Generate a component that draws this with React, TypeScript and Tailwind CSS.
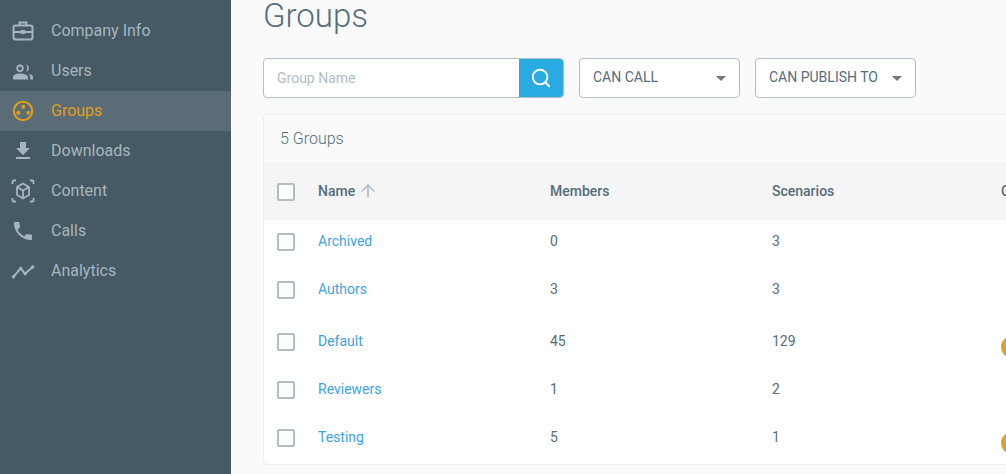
import { ArrowUp, Search } from "lucide-react";
import { ReactNode } from "react";

const navItems: { label: string; active?: boolean; icon: ReactNode }[] = [
	{
		label: "Company Info",
		icon: (
			<svg viewBox="0 0 24 24" className="w-6 h-6" fill="none" stroke="currentColor" strokeWidth="2">
				<path d="M8.500 6.500V3.500h7v3" />
				<rect x="2.500" y="6.500" width="19" height="14" rx="2" />
				<path d="M2.500 13h7.500M14 13h7.500" />
				<rect x="10.300" y="11.500" width="3.400" height="3" fill="currentColor" strokeWidth="1" />
			</svg>
		),
	},
	{
		label: "Users",
		icon: (
			<svg viewBox="0 0 24 24" className="w-6 h-6" fill="currentColor">
				<path d="M9 13a3.700 3.700 0 1 0 0-7.400A3.700 3.700 0 0 0 9 13zm0-5.600a1.900 1.900 0 1 1 0 3.800 1.900 1.900 0 0 1 0-3.800zM15 12.800a3.700 3.700 0 0 0 0-7.200c.8 1 1.200 2.300 1.200 3.600S15.800 11.800 15 12.800zM9 14.500c-3 0-7 1.400-7 3.600V20.500h15v-2.400c0-2.200-5-3.600-8-3.600zM17 14.800c1.500.8 2.200 2 2.200 3.300v2.400H22v-2.400c0-1.800-2.400-3-5-3.300z" />
			</svg>
		),
	},
	{
		label: "Groups",
		active: true,
		icon: (
			<svg viewBox="0 0 24 24" className="w-6 h-6" fill="currentColor">
				<circle cx="12" cy="12" r="9.200" fill="none" stroke="currentColor" strokeWidth="2" />
				<circle cx="12.300" cy="7.700" r="2" />
				<circle cx="7.300" cy="13.700" r="2" />
				<circle cx="17.300" cy="13.700" r="2" />
			</svg>
		),
	},
	{
		label: "Downloads",
		icon: (
			<svg viewBox="0 0 24 24" className="w-6 h-6" fill="currentColor">
				<path d="M19 9h-4V3H9v6H5l7 7 7-7zM5 18v2h14v-2H5z" />
			</svg>
		),
	},
	{
		label: "Content",
		icon: (
			<svg viewBox="0 0 24 24" className="w-6 h-6" fill="none" stroke="currentColor">
				<path d="M5 1.500H2.500a1 1 0 0 0-1 1V5M19 1.500h2.500a1 1 0 0 1 1 1V5M5 22.500H2.500a1 1 0 0 1-1-1V19M19 22.500h2.500a1 1 0 0 0 1-1V19" strokeWidth="1.800" />
				<path d="M12 4.500l6 3.500v8l-6 3.500L6 16V8z" strokeWidth="1.800" />
				<path d="M6 8l6 3.500L18 8M12 11.500v8" strokeWidth="1.800" />
			</svg>
		),
	},
	{
		label: "Calls",
		icon: (
			<svg viewBox="0 0 24 24" className="w-6 h-6" fill="currentColor">
				<path d="M6.620 10.790c1.440 2.830 3.760 5.140 6.590 6.590l2.200-2.200c.270-.270.670-.360 1.020-.240 1.120.370 2.330.570 3.570.570.550 0 1 .450 1 1V20c0 .550-.450 1-1 1-9.390 0-17-7.610-17-17 0-.550.450-1 1-1h3.500c.550 0 1 .450 1 1 0 1.250.200 2.450.570 3.570.110.350.030.740-.250 1.020l-2.200 2.200z" />
			</svg>
		),
	},
	{
		label: "Analytics",
		icon: (
			<svg viewBox="0 0 24 24" className="w-6 h-6" fill="currentColor" stroke="currentColor" strokeWidth="2">
				<path d="M2.500 17.700l7.200-8.400 4.300 5.400L21.700 8" fill="none" />
				<circle cx="2.500" cy="17.700" r=".8" />
				<circle cx="9.700" cy="9.300" r=".6" />
				<circle cx="14" cy="14.700" r=".6" />
				<circle cx="21.700" cy="8" r=".8" />
			</svg>
		),
	},
];

const rows = [
	{ name: "Archived", members: "0", scenarios: "3", height: "h-[45px] pb-[3px]" },
	{ name: "Authors", members: "3", scenarios: "3", height: "h-12" },
	{ name: "Default", members: "45", scenarios: "129", height: "h-14", badge: true },
	{ name: "Reviewers", members: "1", scenarios: "2", height: "h-10" },
	{ name: "Testing", members: "5", scenarios: "1", height: "h-[55px]", badge: true },
];

const Checkbox = () => (
	<span className="block w-[18px] h-[18px] border-2 border-[#b0bec5] rounded-[2px] bg-white shrink-0" />
);

const Dropdown = ({ label }: { label: string }) => (
	<div className="w-[161px] h-10 pl-[13px] pr-[13px] flex items-center justify-between bg-white border border-[#b0bec5] rounded text-sm text-[#546e7a]">
		<span className="-mt-[2px]">{label}</span>
		<span className="border-x-[5px] border-x-transparent border-t-[5px] border-t-[#757575]" />
	</div>
);

const App = () => {
	return (
		<div className="flex w-[1006px] h-[474px] overflow-hidden bg-[#fafafa] font-['Roboto',sans-serif]">
			<aside className="w-[231px] shrink-0 pt-[11px] bg-[#455a64]">
				{navItems.map((item) => (
					<div
						key={item.label}
						className={
							item.active
								? "h-10 pl-[11px] flex items-center gap-4 bg-[#5a6d77] text-[#e39e1b]"
								: "h-10 pl-[11px] flex items-center gap-4 text-[#a7b6be]"
						}
					>
						{item.icon}
						<span className="text-base">{item.label}</span>
					</div>
				))}
			</aside>

			<main className="flex-1 min-w-0 pl-8">
				<h1 className="h-[31px] text-[33px] leading-[31px] font-light text-[#546e7a]">Groups</h1>

				<div className="mt-[27px] flex gap-[15px]">
					<div className="w-[301px] h-10 flex bg-white border border-[#b0bec5] rounded overflow-hidden">
						<input
							placeholder="Group Name"
							className="flex-1 min-w-0 pl-[13px] text-sm text-[#546e7a] placeholder:text-[#b0bec5] outline-none"
						/>
						<button className="w-11 flex items-center justify-center bg-[#29abe2] text-white">
							<Search size={22} strokeWidth={2} />
						</button>
					</div>
					<Dropdown label="CAN CALL" />
					<Dropdown label="CAN PUBLISH TO" />
				</div>

				<section className="mt-4 w-[900px] h-[351px] bg-white border border-[#eceff1] rounded">
					<div className="h-[49px] px-4 flex items-center bg-[#fafafa] border-b border-[#eeeeee] text-base font-light text-[#546e7a]">
						5 Groups
					</div>

					<div className="h-14 flex items-center bg-[#f5f5f5] text-sm font-medium text-[#546e7a]">
						<div className="w-[54px] pl-[13px]">
							<Checkbox />
						</div>
						<div className="w-[232px] -mt-[2px] flex items-center gap-[3px]">
							Name
							<ArrowUp size={20} strokeWidth={2} className="text-[#b0bec5]" />
						</div>
						<div className="w-[222px] -mt-[2px]">Members</div>
						<div className="w-[229px] -mt-[2px]">Scenarios</div>
						<div className="-mt-[2px]">Can Call</div>
					</div>

					{rows.map((row) => (
						<div key={row.name} className={`${row.height} flex items-center text-sm text-[#546e7a]`}>
							<div className="w-[54px] pl-[13px] mt-[2px]">
								<Checkbox />
							</div>
							<a href="#" className="w-[232px] text-[#3fa3e0]">
								{row.name}
							</a>
							<div className="w-[222px]">{row.members}</div>
							<div className="w-[229px]">{row.scenarios}</div>
							{row.badge && <span className="mt-3 w-[22px] h-[22px] rounded-full bg-[#e0a030]" />}
						</div>
					))}
				</section>
			</main>
		</div>
	);
};

export default App;
